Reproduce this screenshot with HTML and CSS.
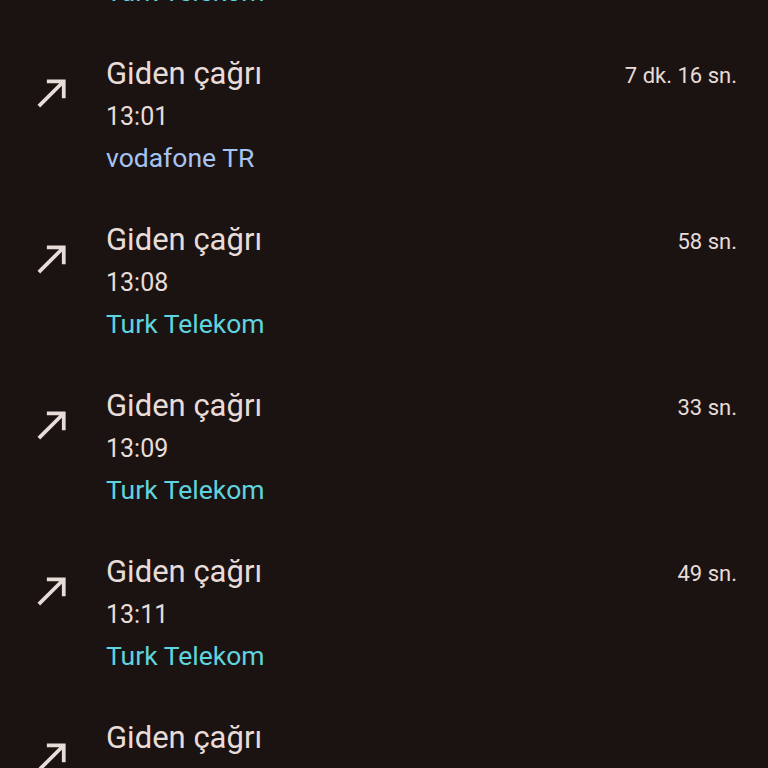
FILE: index.html
```html
<!DOCTYPE html>
<html lang="tr">
<head>
<meta charset="utf-8">
<link rel="stylesheet" href="styles.css">
</head>
<body>
<ul class="calls">
  <li class="call">
    <svg class="icon" viewBox="0 0 24 24"><path d="M9 5v2h6.59L4 18.59 5.41 20 17 8.41V15h2V5z"/></svg>
    <div class="info">
      <div class="title">Giden çağrı</div>
      <div class="time">13:00</div>
      <div class="carrier tt">Turk Telekom</div>
    </div>
    <div class="dur">1 dk.</div>
  </li>
  <li class="call">
    <svg class="icon" viewBox="0 0 24 24"><path d="M9 5v2h6.59L4 18.59 5.41 20 17 8.41V15h2V5z"/></svg>
    <div class="info">
      <div class="title">Giden çağrı</div>
      <div class="time">13:01</div>
      <div class="carrier vf">vodafone TR</div>
    </div>
    <div class="dur">7 dk. 16 sn.</div>
  </li>
  <li class="call">
    <svg class="icon" viewBox="0 0 24 24"><path d="M9 5v2h6.59L4 18.59 5.41 20 17 8.41V15h2V5z"/></svg>
    <div class="info">
      <div class="title">Giden çağrı</div>
      <div class="time">13:08</div>
      <div class="carrier tt">Turk Telekom</div>
    </div>
    <div class="dur">58 sn.</div>
  </li>
  <li class="call">
    <svg class="icon" viewBox="0 0 24 24"><path d="M9 5v2h6.59L4 18.59 5.41 20 17 8.41V15h2V5z"/></svg>
    <div class="info">
      <div class="title">Giden çağrı</div>
      <div class="time">13:09</div>
      <div class="carrier tt">Turk Telekom</div>
    </div>
    <div class="dur">33 sn.</div>
  </li>
  <li class="call">
    <svg class="icon" viewBox="0 0 24 24"><path d="M9 5v2h6.59L4 18.59 5.41 20 17 8.41V15h2V5z"/></svg>
    <div class="info">
      <div class="title">Giden çağrı</div>
      <div class="time">13:11</div>
      <div class="carrier tt">Turk Telekom</div>
    </div>
    <div class="dur">49 sn.</div>
  </li>
  <li class="call">
    <svg class="icon" viewBox="0 0 24 24"><path d="M9 5v2h6.59L4 18.59 5.41 20 17 8.41V15h2V5z"/></svg>
    <div class="info">
      <div class="title">Giden çağrı</div>
    </div>
  </li>
</ul>
</body>
</html>
```
FILE: styles.css
```css
html, body {
  margin: 0;
  padding: 0;
  background: #1b1311;
  height: 100%;
  overflow: hidden;
}
body {
  font-family: Roboto, "Noto Sans", sans-serif;
  color: #e8dcd8;
}
.calls {
  list-style: none;
  margin: -113px 0 0 0;
  padding: 0;
  display: flex;
  flex-direction: column;
  gap: 40px;
}
.call {
  display: flex;
  align-items: flex-start;
  padding-right: 31px;
}
.icon {
  width: 45px;
  height: 45px;
  margin: 17px 31px 0 30px;
  fill: #e8dcd8;
  flex: none;
}
.info {
  flex: 1;
  display: flex;
  flex-direction: column;
}
.title {
  font-size: 31px;
  line-height: 42px;
}
.time {
  font-size: 25px;
  line-height: 42px;
  padding-top: 1px;
}
.carrier {
  font-size: 26.5px;
  line-height: 42px;
  margin-top: -1px;
}
.vf { color: #a6c3f2; }
.tt { color: #5fd3df; }
.dur {
  font-size: 22px;
  line-height: 42px;
  padding-top: 2px;
}
```
